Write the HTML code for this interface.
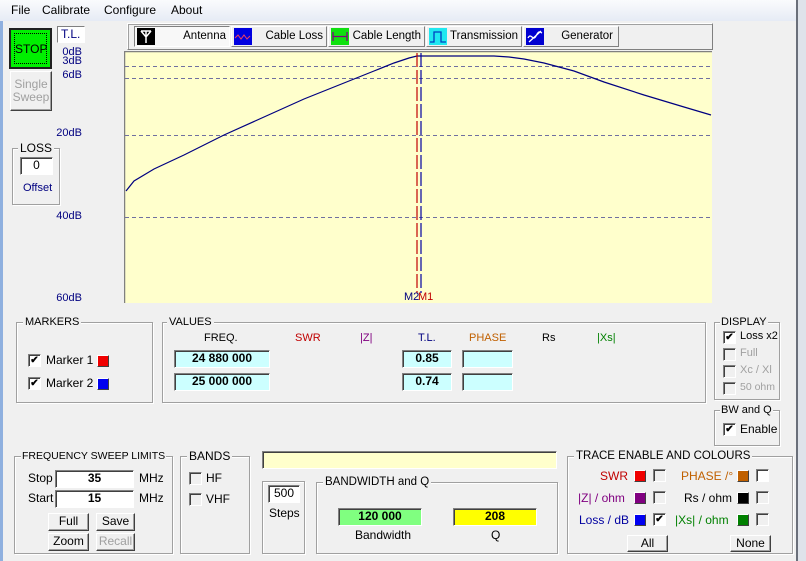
<!DOCTYPE html>
<html><head><meta charset="utf-8"><style>
*{box-sizing:border-box;margin:0;padding:0}
body{width:806px;height:561px;overflow:hidden;background:#f0f0f0;font-family:"Liberation Sans",sans-serif;font-size:11px;color:#000;position:relative}
.a{position:absolute;white-space:nowrap}
.g{position:absolute;border:1px solid #a0a0a0;box-shadow:1px 1px 0 #fff,inset 1px 1px 0 #fff}
.lg{position:absolute;top:-8px;left:6px;background:#f0f0f0;padding:0 2px;font-size:11px;line-height:14px;white-space:nowrap}
.sk{position:absolute;border:1px solid;border-color:#808080 #fff #fff #808080;box-shadow:inset 1px 1px 0 #404040;text-align:center;font-weight:bold;font-size:12px;line-height:15px}
.bt{position:absolute;border:1px solid;border-color:#fff #404040 #404040 #fff;box-shadow:inset -1px -1px 0 #a0a0a0;background:#f0f0f0;text-align:center;line-height:15px;font-size:11px}
.cb{position:absolute;width:13px;height:13px;background:#fff;border:1px solid;border-color:#808080 #fff #fff #808080;box-shadow:inset 1px 1px 0 #404040;font-size:10px;line-height:11px;text-align:center;font-weight:bold}
.cb.d{background:#f0f0f0}
.sq{position:absolute;width:12px;height:12px;border:1px solid;border-color:#fff #404040 #404040 #fff}
.tab{position:absolute;top:26px;height:21px;border:1px solid;border-color:#fff #808080 #808080 #fff;background:#f0f0f0;text-align:right;padding-right:3px;line-height:19px;font-size:11.5px;white-space:nowrap}
.ic{position:absolute;left:2px;top:1px;width:18px;height:17px}
</style></head><body>
<div class="a" style="left:0;top:0;width:806px;height:21px;background:linear-gradient(#fafbfd,#e6ebf5)"></div>
<div class="a" style="left:11px;top:3px;font-size:12px">File</div>
<div class="a" style="left:42px;top:3px;font-size:12px">Calibrate</div>
<div class="a" style="left:104px;top:3px;font-size:12px">Configure</div>
<div class="a" style="left:171px;top:3px;font-size:12px">About</div>
<div class="a" style="left:0;top:21px;width:3px;height:540px;background:#8fb0df"></div>
<div class="a" style="left:796px;top:0;width:2px;height:561px;background:#6a6f7a"></div>
<div class="a" style="left:798px;top:0;width:8px;height:561px;background:#dfe3ea"></div>

<div class="a" style="left:9px;top:28px;width:43px;height:41px;border:2px solid #202020;background:#00f000"><div style="position:absolute;left:3px;top:3px;right:3px;bottom:3px;border:1px dotted #000;text-align:center;line-height:31px;font-size:12px">STOP</div></div>
<div class="bt" style="left:10px;top:71px;width:42px;height:40px;color:#a0a0a0;line-height:13px;padding-top:6px;font-size:12px">Single<br>Sweep</div>
<div class="a" style="left:57px;top:26px;width:28px;height:17px;background:#fff;border:1px solid;border-color:#808080 #fff #fff #808080;color:#000080;line-height:15px;padding-left:3px;font-size:12px">T.L.</div>
<div class="a" style="left:58px;top:48px;color:#000080;font-size:11px;line-height:9px;text-align:right;width:24px">0dB<br>3dB</div>
<div class="a" style="left:58px;top:69px;color:#000080;font-size:11px;width:24px;text-align:right">6dB</div>
<div class="a" style="left:52px;top:127px;color:#000080;font-size:11px;width:30px;text-align:right">20dB</div>
<div class="a" style="left:52px;top:210px;color:#000080;font-size:11px;width:30px;text-align:right">40dB</div>
<div class="a" style="left:52px;top:292px;color:#000080;font-size:11px;width:30px;text-align:right">60dB</div>
<div class="g" style="left:12px;top:148px;width:48px;height:57px"><div class="lg" style="left:5px;font-size:12px">LOSS</div></div>
<div class="sk" style="left:20px;top:157px;width:33px;height:18px;background:#fff;font-weight:normal">0</div>
<div class="a" style="left:23px;top:182px;color:#000080">Offset</div>

<div class="a" style="left:127px;top:23px;width:586px;height:27px;border:1px solid;border-color:#fff #808080 #808080 #fff;box-shadow:inset 1px 1px 0 #a0a0a0"></div>
<div class="tab" style="left:134px;width:96px;border-color:#808080 #fff #fff #808080;background:#f8f8f8">
<svg class="ic" viewBox="0 0 18 17"><rect width="18" height="17" fill="#000"/><path d="M4 3h10M4 3l5 6 5-6M9 3v12" stroke="#fff" stroke-width="1.5" fill="none"/></svg>Antenna</div>
<div class="tab" style="left:231px;width:96px"><svg class="ic" viewBox="0 0 18 17"><rect width="18" height="17" fill="#0000e0"/><path d="M1 10l3-3 3 4 3-4 3 4 3-3" stroke="#f04060" fill="none"/></svg>Cable Loss</div>
<div class="tab" style="left:328px;width:97px"><svg class="ic" viewBox="0 0 18 17"><rect width="18" height="17" fill="#10e010"/><path d="M2 4v9M16 4v9M2 8.5h14" stroke="#800080" fill="none" stroke-width="1.3"/></svg>Cable Length</div>
<div class="tab" style="left:426px;width:96px"><svg class="ic" viewBox="0 0 18 17"><rect width="18" height="17" fill="#20e8f0"/><path d="M1 14h4V4h7v10h5" stroke="#0040c0" fill="none" stroke-width="1.3"/></svg>Transmission</div>
<div class="tab" style="left:523px;width:96px"><svg class="ic" viewBox="0 0 18 17"><rect width="18" height="17" fill="#0000d0"/><path d="M2 10c3-6 5 4 8-2s4-4 6-3M3 14l12-11" stroke="#fff" fill="none" stroke-width="1.3"/></svg><span style="padding-right:2px">Generator</span></div>

<svg class="a" style="left:124px;top:51px" width="588" height="252" viewBox="0 0 588 252">
<rect width="588" height="252" fill="#ffffcc"/>
<path d="M0.5 0V252M0 0.5H588" stroke="#808080" stroke-width="1.5"/>
<g stroke="#7070a0" stroke-dasharray="4 3"><path d="M1 15.5H588M1 27.5H588M1 84.5H588M1 166.5H588"/></g>
<path d="M2 140 L10 130 L30 118 L60 104 L100 84 L140 66 L180 48 L220 32 L250 20 L270 12 L285 7 L293 5 L300 5 L330 5 L370 5 L385 6 L400 8 L420 12 L450 20 L480 31 L520 44 L560 56 L587 64" fill="none" stroke="#000080" stroke-width="1.2"/>
<path d="M293 2V242" stroke="#c00000" stroke-width="1.2" stroke-dasharray="14 3"/>
<path d="M297 2V242" stroke="#0000a0" stroke-width="1.2" stroke-dasharray="14 3"/>
<text x="280" y="249" font-family="Liberation Sans" font-size="11" fill="#000080">M2</text>
<text x="294" y="249" font-family="Liberation Sans" font-size="11" fill="#c00000">M1</text>
</svg>

<div class="g" style="left:16px;top:322px;width:137px;height:81px"><div class="lg">MARKERS</div></div>
<div class="cb" style="left:28px;top:354px">✔</div><div class="a" style="left:46px;top:353px;font-size:12px">Marker 1</div><div class="sq" style="left:97px;top:355px;background:#f00000"></div>
<div class="cb" style="left:28px;top:377px">✔</div><div class="a" style="left:46px;top:376px;font-size:12px">Marker 2</div><div class="sq" style="left:97px;top:378px;background:#0000f0"></div>

<div class="g" style="left:162px;top:322px;width:544px;height:81px"><div class="lg" style="left:4px">VALUES</div></div>
<div class="a" style="left:204px;top:332px">FREQ.</div>
<div class="a" style="left:295px;top:332px;color:#c00000">SWR</div>
<div class="a" style="left:360px;top:332px;color:#800080">|Z|</div>
<div class="a" style="left:418px;top:332px;color:#000080">T.L.</div>
<div class="a" style="left:469px;top:332px;color:#c06000">PHASE</div>
<div class="a" style="left:542px;top:332px">Rs</div>
<div class="a" style="left:597px;top:332px;color:#008000">|Xs|</div>
<div class="sk" style="left:174px;top:350px;width:96px;height:18px;background:#ccffff">24 880 000</div>
<div class="sk" style="left:174px;top:373px;width:96px;height:18px;background:#ccffff">25 000 000</div>
<div class="sk" style="left:402px;top:350px;width:50px;height:18px;background:#ccffff">0.85</div>
<div class="sk" style="left:402px;top:373px;width:50px;height:18px;background:#ccffff">0.74</div>
<div class="sk" style="left:462px;top:350px;width:51px;height:18px;background:#ccffff"></div>
<div class="sk" style="left:462px;top:373px;width:51px;height:18px;background:#ccffff"></div>

<div class="g" style="left:714px;top:322px;width:66px;height:78px"><div class="lg" style="left:5px;padding:0 1px">DISPLAY</div></div>
<div class="cb" style="left:723px;top:331px">✔</div><div class="a" style="left:740px;top:330px">Loss x2</div>
<div class="cb d" style="left:723px;top:348px"></div><div class="a" style="left:740px;top:347px;color:#a0a0a0">Full</div>
<div class="cb d" style="left:723px;top:365px"></div><div class="a" style="left:740px;top:364px;color:#a0a0a0">Xc / Xl</div>
<div class="cb d" style="left:723px;top:382px"></div><div class="a" style="left:740px;top:381px;color:#a0a0a0;font-size:10.5px">50 ohm</div>
<div class="g" style="left:714px;top:410px;width:66px;height:36px"><div class="lg" style="left:5px;padding:0 1px">BW and Q</div></div>
<div class="cb" style="left:723px;top:423px">✔</div><div class="a" style="left:740px;top:422px;font-size:12px">Enable</div>

<div class="g" style="left:14px;top:456px;width:159px;height:98px"><div class="lg" style="left:6px;padding:0 1px;font-size:10.5px">FREQUENCY SWEEP LIMITS</div></div>
<div class="a" style="left:28px;top:471px;font-size:12px">Stop</div><div class="sk" style="left:55px;top:470px;width:79px;height:18px;background:#fff">35</div><div class="a" style="left:139px;top:471px;font-size:12px">MHz</div>
<div class="a" style="left:28px;top:491px;font-size:12px">Start</div><div class="sk" style="left:55px;top:490px;width:79px;height:18px;background:#fff">15</div><div class="a" style="left:139px;top:491px;font-size:12px">MHz</div>
<div class="bt" style="left:48px;top:513px;width:41px;height:18px;font-size:12px">Full</div>
<div class="bt" style="left:96px;top:513px;width:39px;height:18px;font-size:12px">Save</div>
<div class="bt" style="left:48px;top:533px;width:41px;height:18px;font-size:12px">Zoom</div>
<div class="bt" style="left:96px;top:533px;width:39px;height:18px;color:#a0a0a0;font-size:12px">Recall</div>

<div class="g" style="left:180px;top:456px;width:70px;height:98px"><div class="lg" style="left:6px;font-size:12px">BANDS</div></div>
<div class="cb d" style="left:189px;top:472px"></div><div class="a" style="left:206px;top:471px;font-size:12px">HF</div>
<div class="cb d" style="left:189px;top:493px"></div><div class="a" style="left:206px;top:492px;font-size:12px">VHF</div>

<div class="a" style="left:262px;top:451px;width:295px;height:18px;background:#ffffcc;border:1px solid;border-color:#808080 #fff #fff #808080;box-shadow:inset 1px 1px 0 #404040"></div>
<div class="g" style="left:262px;top:481px;width:43px;height:73px"></div>
<div class="sk" style="left:268px;top:485px;width:32px;height:18px;background:#fff;font-weight:normal">500</div>
<div class="a" style="left:269px;top:506px;font-size:12px">Steps</div>
<div class="g" style="left:316px;top:482px;width:242px;height:72px"><div class="lg" style="left:6px;font-size:11.5px">BANDWIDTH and Q</div></div>
<div class="sk" style="left:338px;top:508px;width:84px;height:18px;background:#80ff80">120 000</div>
<div class="sk" style="left:453px;top:508px;width:84px;height:18px;background:#ffff00">208</div>
<div class="a" style="left:355px;top:528px;font-size:12px">Bandwidth</div>
<div class="a" style="left:491px;top:528px;font-size:12px">Q</div>

<div class="g" style="left:567px;top:456px;width:226px;height:98px"><div class="lg" style="left:6px;font-size:11.5px">TRACE ENABLE AND COLOURS</div></div>
<div class="a" style="left:600px;top:469px;color:#c00000;font-size:12px">SWR</div><div class="sq" style="left:634px;top:470px;background:#f00000"></div><div class="cb d" style="left:653px;top:469px"></div>
<div class="a" style="left:578px;top:491px;color:#800080;font-size:12px">|Z| / ohm</div><div class="sq" style="left:634px;top:492px;background:#800080"></div><div class="cb d" style="left:653px;top:491px"></div>
<div class="a" style="left:579px;top:513px;color:#0000a0;font-size:12px">Loss / dB</div><div class="sq" style="left:634px;top:514px;background:#0000f0"></div><div class="cb" style="left:653px;top:513px">✔</div>
<div class="a" style="left:681px;top:469px;color:#c06000;font-size:12px">PHASE /°</div><div class="sq" style="left:737px;top:470px;background:#c06000"></div><div class="cb" style="left:756px;top:469px"></div>
<div class="a" style="left:684px;top:491px;font-size:12px">Rs / ohm</div><div class="sq" style="left:737px;top:492px;background:#000"></div><div class="cb d" style="left:756px;top:491px"></div>
<div class="a" style="left:675px;top:513px;color:#008000;font-size:12px">|Xs| / ohm</div><div class="sq" style="left:737px;top:514px;background:#008000"></div><div class="cb d" style="left:756px;top:513px"></div>
<div class="bt" style="left:627px;top:535px;width:41px;height:17px;font-size:12px">All</div>
<div class="bt" style="left:730px;top:535px;width:41px;height:17px;font-size:12px">None</div>
</body></html>
